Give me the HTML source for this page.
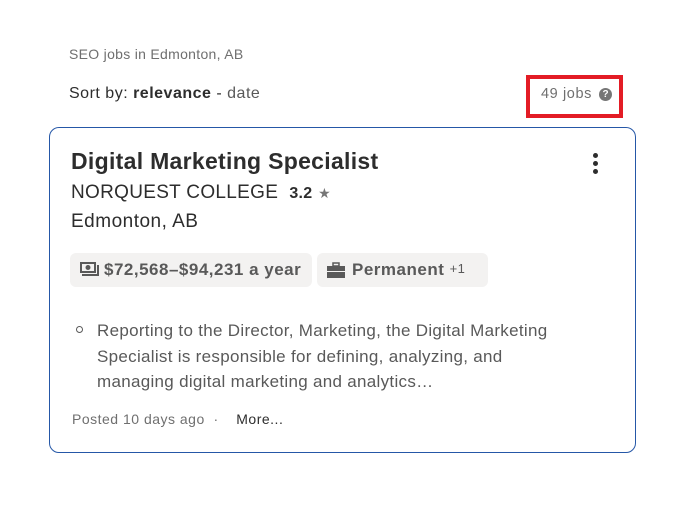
<!DOCTYPE html>
<html><head><style>
*{margin:0;padding:0;box-sizing:border-box}
body{width:679px;height:511px;background:#fff;font-family:"Liberation Sans",sans-serif;position:relative;overflow:hidden;color:#2d2d2d}
.a{position:absolute;white-space:nowrap}
</style></head><body>
<div class="a" style="left:69px;top:46px;font-size:14px;color:#6f6f6f;letter-spacing:0.3px">SEO jobs in Edmonton, AB</div>
<div class="a" style="left:69px;top:85px;font-size:16px;color:#2d2d2d;letter-spacing:0.5px">Sort by: <b>relevance</b> - <span style="color:#595959">date</span></div>
<div class="a" style="left:526px;top:75px;width:97px;height:43px;border:4px solid #e31c25"></div>
<div class="a" style="left:541px;top:86px;font-size:14.5px;color:#6f6f6f;letter-spacing:0.6px">49 jobs</div>
<div class="a" style="left:599px;top:88px;width:13px;height:13px;border-radius:50%;background:#767676;color:#fff;font-size:10px;font-weight:bold;text-align:center;line-height:13px">?</div>
<div class="a" style="left:49px;top:127px;width:587px;height:326px;border:1px solid #2557a7;border-radius:10px"></div>
<div class="a" style="left:593px;top:153px;width:5px;height:5px;border-radius:50%;background:#2d2d2d"></div>
<div class="a" style="left:593px;top:161px;width:5px;height:5px;border-radius:50%;background:#2d2d2d"></div>
<div class="a" style="left:593px;top:169px;width:5px;height:5px;border-radius:50%;background:#2d2d2d"></div>
<div class="a" style="left:71px;top:148px;font-size:23px;font-weight:bold;letter-spacing:0.3px">Digital Marketing Specialist</div>
<div class="a" style="left:71px;top:182px;font-size:19px;letter-spacing:0.3px">NORQUEST COLLEGE &nbsp;<b style="font-size:16px">3.2</b> <span style="color:#767676;font-size:14px">★</span></div>
<div class="a" style="left:71px;top:211px;font-size:19px;letter-spacing:0.5px">Edmonton, AB</div>
<div class="a" style="left:70px;top:253px;width:242px;height:34px;background:#f3f2f1;border-radius:6px"></div>
<div class="a" style="left:317px;top:253px;width:171px;height:34px;background:#f3f2f1;border-radius:6px"></div>
<svg class="a" style="left:79px;top:261px" width="20" height="18" viewBox="0 0 20 18"><rect x="1" y="1" width="16" height="11" fill="#595959"/><rect x="3" y="3" width="12" height="7" fill="#f3f2f1"/><circle cx="9" cy="6.5" r="2.5" fill="#595959"/><path d="M3 14H19V4" stroke="#595959" stroke-width="2" fill="none"/></svg>
<div class="a" style="left:104px;top:260px;font-size:17px;font-weight:bold;color:#595959;letter-spacing:0.5px">$72,568–$94,231 a year</div>
<svg class="a" style="left:327px;top:262px" width="18" height="16" viewBox="0 0 18 16"><rect x="6" y="1" width="6" height="3" fill="none" stroke="#595959" stroke-width="1.5"/><rect x="0" y="4" width="18" height="12" fill="#595959"/><rect x="0" y="9" width="18" height="1" fill="#f3f2f1"/></svg>
<div class="a" style="left:352px;top:260px;font-size:17px;font-weight:bold;color:#595959;letter-spacing:0.5px">Permanent <span style="font-weight:normal;font-size:13px;vertical-align:2px">+1</span></div>
<div class="a" style="left:76px;top:326px;width:7px;height:7px;border:1px solid #595959;border-radius:50%"></div>
<div class="a" style="left:97px;top:318px;font-size:17px;line-height:25.5px;color:#595959;white-space:normal;width:485px;letter-spacing:0.3px">Reporting to the Director, Marketing, the Digital Marketing Specialist is responsible for defining, analyzing, and managing digital marketing and analytics…</div>
<div class="a" style="left:72px;top:411px;font-size:14px;color:#6f6f6f;letter-spacing:0.5px">Posted 10 days ago &nbsp;· &nbsp;&nbsp;&nbsp;<span style="color:#2d2d2d">More...</span></div>
</body></html>
